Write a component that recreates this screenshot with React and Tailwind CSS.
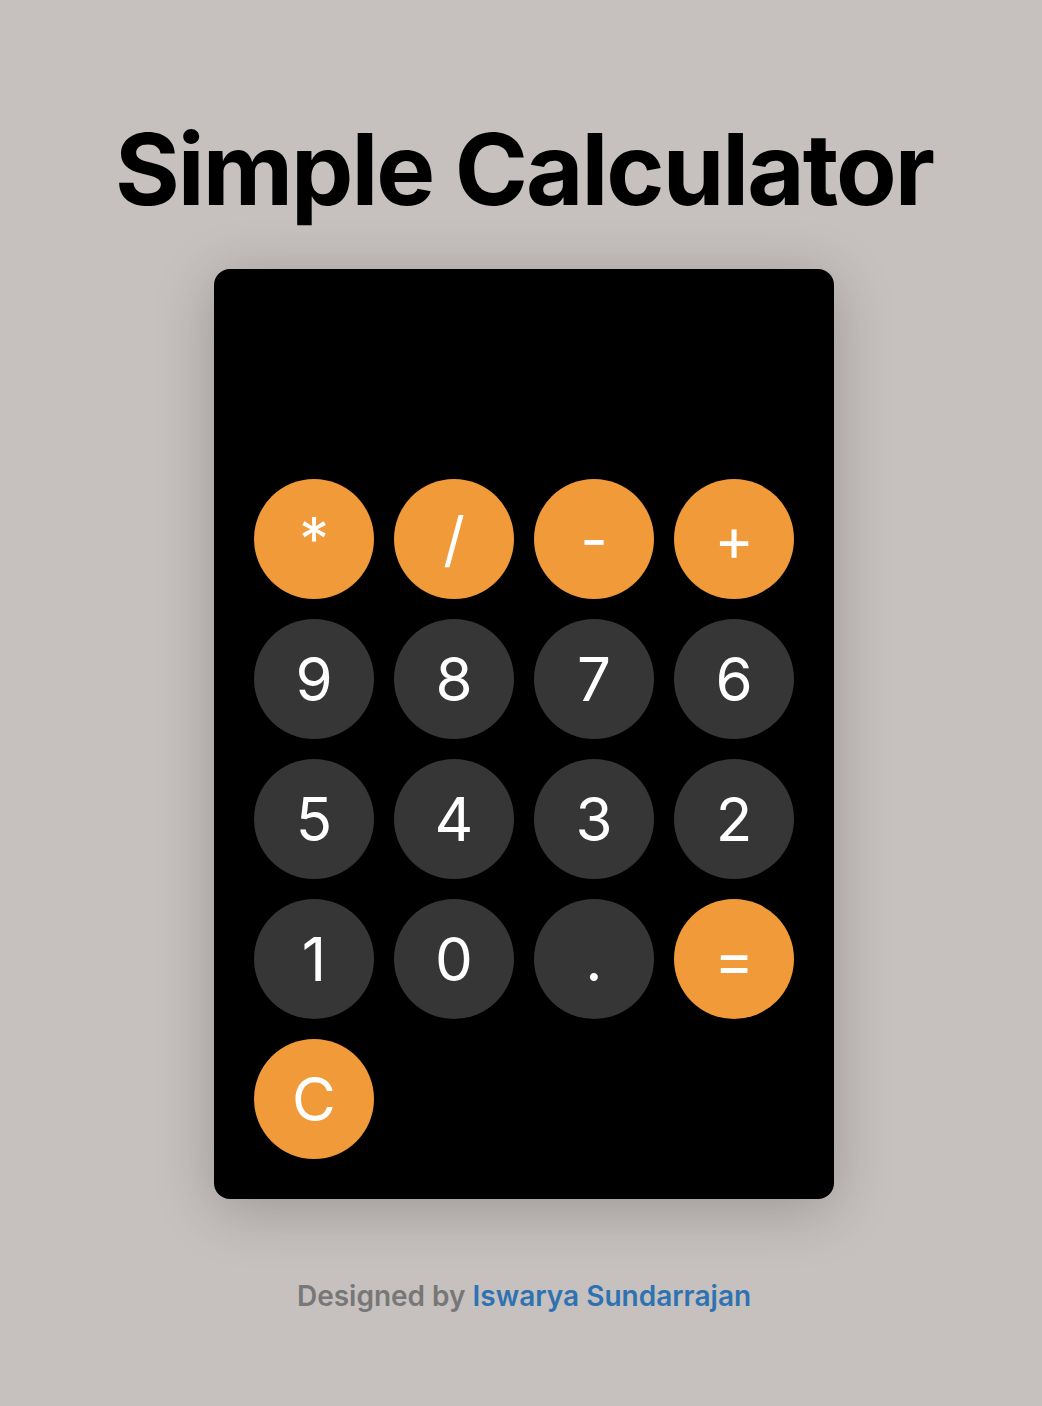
const keys = [
  { label: "*", op: true },
  { label: "/", op: true },
  { label: "-", op: true },
  { label: "+", op: true },
  { label: "9" },
  { label: "8" },
  { label: "7" },
  { label: "6" },
  { label: "5" },
  { label: "4" },
  { label: "3" },
  { label: "2" },
  { label: "1" },
  { label: "0" },
  { label: "." },
  { label: "=", op: true },
  { label: "C", op: true },
];

export default function App() {
  return (
    <div
      className="min-h-[1406px] w-full bg-[#c6c1be] pl-[6px] flex flex-col items-center"
      style={{ fontFamily: "Inter, 'Liberation Sans', sans-serif" }}
    >
      <h1 className="mt-[112px] text-[99px] leading-[114px] font-bold tracking-[-0.02em] text-black">
        Simple Calculator
      </h1>

      {/* calculator body */}
      <div className="mt-[43px] w-[620px] rounded-2xl bg-black px-10 pb-10 pt-[210px] shadow-[0_10px_60px_rgba(0,0,0,0.22)]">
        <div className="grid grid-cols-4 gap-5">
          {keys.map((k) => (
            <button
              key={k.label}
              type="button"
              className={
                "flex h-[120px] w-[120px] items-center justify-center rounded-full text-[60px] leading-none text-white " +
                (k.op ? "bg-[#f09a3a]" : "bg-[#363636]")
              }
            >
              {k.label}
            </button>
          ))}
        </div>
      </div>

      <p className="mt-[76px] text-[28px] font-semibold text-[#777777]">
        Designed by <span className="text-[#2f72b1]">Iswarya Sundarrajan</span>
      </p>
    </div>
  );
}
